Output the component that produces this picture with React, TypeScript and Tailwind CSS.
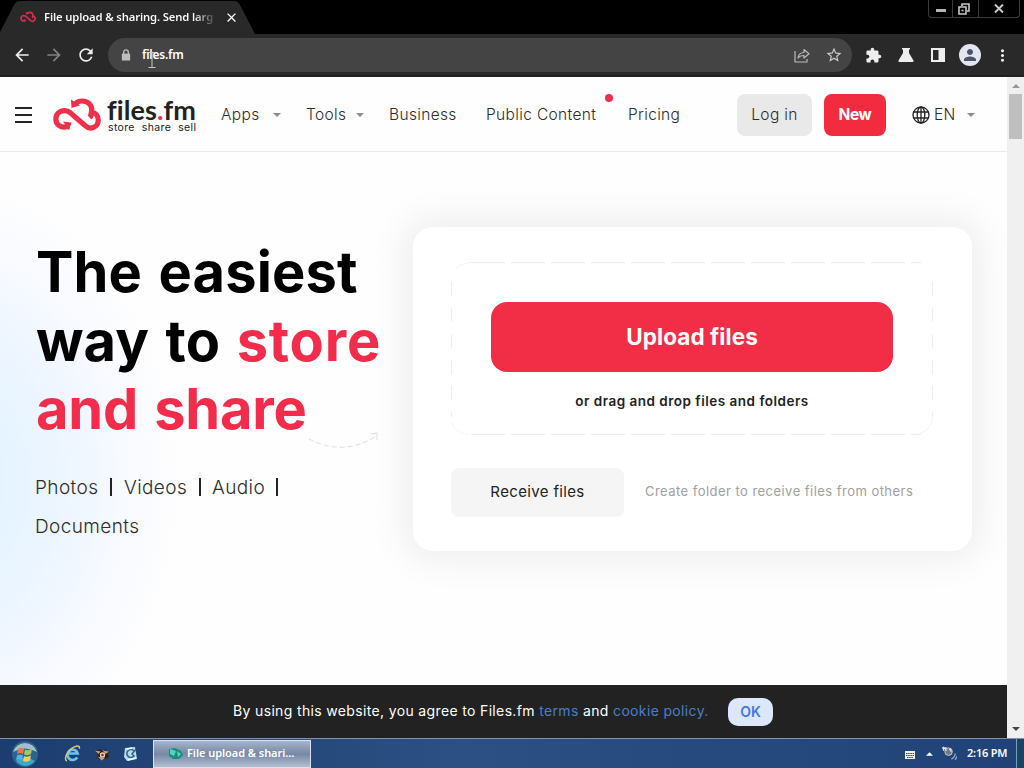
import type { ReactNode } from "react";
import clsx from "clsx";
import { MdArrowBack, MdArrowForward, MdRefresh, MdLock, MdStarBorder, MdExtension, MdMoreVert, MdPerson, MdClose } from "react-icons/md";

function CloudLogo({ className }: { className?: string }) {
  return (
    <svg viewBox="0 0 48 34" className={className} fill="none" stroke="currentColor" strokeWidth="5.2">
      <path d="M14.5 28.5C8 30.5 2.700 26.500 2.900 21C3 13.500 11 10.500 17 14.500L32 27.500C37 32.500 45 29.500 45.2 22.5C45.4 17.500 42.500 14.5 38.5 14C40 6.500 34 2.9 28.5 3C24.5 3.2 22.5 5 21.5 7" />
      <path d="M36.500 19.500C38.800 17.500 39.200 15 38.5 12" />
      <path d="M10 23.500L18.500 24.500L16 32.500Z" fill="currentColor" stroke="none" />
      <path d="M18 1.500L18.500 10L27 7.500Z" fill="currentColor" stroke="none" />
    </svg>
  );
}

function Caret({ className }: { className?: string }) {
  return (
    <svg viewBox="0 0 8 4" className={clsx("h-1 w-2 shrink-0", className)} fill="currentColor">
      <path d="M0 0H8L4 4Z" />
    </svg>
  );
}

function WindowButton({ children, className }: { children: ReactNode; className?: string }) {
  return (
    <span className={clsx("flex items-center justify-center border-r border-[#3c3c3c]", className)}>
      {children}
    </span>
  );
}

function TitleBar() {
  return (
    <div className="flex h-[34px] justify-between bg-black">
      <div className="relative flex h-[34px] w-[256px] items-center pl-5">
        <svg viewBox="0 0 256 34" className="absolute inset-0 h-[34px] w-[256px]" fill="#292929">
          <path d="M0 34V32L14 5Q16 1 20 1H234Q238 1 240 5L255 34Z" />
        </svg>
        <CloudLogo className="relative h-3 w-4 text-[#cf2f4b]" />
        <span className="relative ml-2 w-[174px] bg-linear-to-r from-white from-86% to-[#292929] bg-clip-text font-['Noto_Sans'] text-[11.3px] font-semibold tracking-[-0.15px] whitespace-nowrap text-transparent">
          File upload &amp; sharing. Send larg
        </span>
        <MdClose className="relative ml-[6px] size-[15px] stroke-white text-white" />
      </div>
      <div className="mr-1 flex h-[18px] rounded-b-sm border border-t-0 border-[#3c3c3c] text-[#c8c8c8]">
        <WindowButton className="w-[24px]">
          <span className="mt-1 h-[3px] w-[10px] bg-[#b5b5b5]" />
        </WindowButton>
        <WindowButton className="w-[26px]">
          <svg viewBox="0 0 12 12" className="mr-[3px] size-3" fill="none" stroke="currentColor" strokeWidth="1.6">
            <path d="M4 3V1H11V8H9" />
            <path d="M1 4H8V11H1Z" />
            <path d="M3.5 7.5H5.5" />
          </svg>
        </WindowButton>
        <span className="flex w-[40px] items-center justify-center">
          <svg viewBox="0 0 10 9" className="h-[9px] w-[10px]" fill="none" stroke="currentColor" strokeWidth="2">
            <path d="M1 0.5L9 8.5M9 0.5L1 8.5" />
          </svg>
        </span>
      </div>
    </div>
  );
}

function Toolbar() {
  return (
    <div className="flex h-[43px] items-center border-b-2 border-[#202020] bg-[#292929] pt-px text-[#eeeeee]">
      <MdArrowBack className="ml-3 size-5" />
      <MdArrowForward className="ml-3 size-5 text-[#828282]" />
      <MdRefresh className="ml-3 size-5" />
      <div className="relative ml-3 flex h-[34px] w-[744px] items-center rounded-full bg-[#444444]">
        <svg viewBox="0 0 10 13" className="ml-[13px] h-[12px] w-[10px]" fill="none" stroke="#bdbdbd" strokeWidth="1.500">
          <path d="M0.500 5H9.500V12.500H0.500Z" fill="#bdbdbd" stroke="none" />
          <path d="M2.500 6V3.500A2.500 2.500 0 0 1 7.500 3.500V6" />
        </svg>
        <span className="ml-[11px] font-['Noto_Sans'] text-[12px] font-semibold tracking-[-0.25px] text-white">files.fm</span>
        {/* text cursor over the address */}
        <svg viewBox="0 0 8 18" className="absolute top-[14px] left-[40px] h-[18px] w-2" fill="none" stroke="#c8c8c8">
          <path d="M4 1V15M0.5 15.5H7.5M1 0.5H7" />
        </svg>
        <svg viewBox="0 0 16 16" className="ml-auto size-4" fill="none" stroke="#b9b9b9" strokeWidth="1.2">
          <path d="M1 4V15H13V12" />
          <path d="M4 11C4.500 7.500 6.500 5.500 10 5.500V2.500L15 6.800L10 11V8.500C7.500 8.500 5.500 9 4 11Z" strokeLinejoin="round" />
        </svg>
        <MdStarBorder className="mr-[9px] ml-[15px] size-[18px] text-[#c8c8c8]" />
      </div>
      <MdExtension className="ml-[13px] size-[17px]" />
      <svg viewBox="0 0 16 16" className="ml-4 size-4" fill="currentColor">
        <path d="M4 1H12V2.500H11V6L15.500 13.500Q16 15 14.500 15H1.500Q0 15 0.500 13.500L5 6V2.500H4Z" />
      </svg>
      <svg viewBox="0 0 14 14" className="ml-[17px] size-[14px]" fill="none" stroke="currentColor" strokeWidth="2">
        <path d="M1 1H13V13H1Z" />
        <path d="M8.500 1H13V13H8.500Z" fill="currentColor" />
      </svg>
      <span className="ml-[14px] flex size-[22px] items-center justify-center rounded-full bg-[#e3e6ee] text-[#4c5468]">
        <MdPerson className="size-[18px]" />
      </span>
      <MdMoreVert className="ml-3 size-[19px]" />
    </div>
  );
}

function NavBar() {
  return (
    <nav className="flex h-[75px] items-center border-b border-[#e9e9e9] pt-px text-[15.5px] tracking-[0.35px] text-[#2c2c2c]">
      <div className="ml-[15px] flex w-[17px] flex-col gap-[5px]">
        <span className="h-[2px] bg-[#222]" />
        <span className="h-[2px] bg-[#222]" />
        <span className="h-[2px] bg-[#222]" />
      </div>
      <CloudLogo className="ml-[21px] h-[34px] w-12 text-[#f0304a]" />
      <div className="ml-[6px] flex w-[114px] flex-col pt-[2px] text-[#222]">
        <span className="font-['Lato'] text-[27px] leading-[24px] font-bold tracking-[0.1px]">
          files<span className="text-[#f0304a]">.</span>fm
        </span>
        <span className="flex gap-[7px] pl-px text-[10.500px] leading-[11px] tracking-[0.35px]">
          <span>store</span>
          <span>share</span>
          <span>sell</span>
        </span>
      </div>
      <span className="w-[52px] font-light">Apps</span>
      <Caret className="text-[#8c8c8c]" />
      <span className="ml-[25px] w-[50px] font-light">Tools</span>
      <Caret className="text-[#8c8c8c]" />
      <span className="ml-[25px] w-[97px] font-light">Business</span>
      <span className="relative w-[142px] font-light whitespace-nowrap">
        Public Content
        <span className="absolute -top-[9px] left-[119px] size-2 rounded-full bg-[#ee2d50]" />
      </span>
      <span className="w-[109px] font-light">Pricing</span>
      <span className="flex h-[42px] w-[75px] items-center justify-center rounded-lg bg-[#e9e9e9] font-light">Log in</span>
      <span className="ml-3 flex h-[42px] w-[62px] items-center justify-center rounded-lg bg-[#f22b3f] font-bold tracking-tight text-white">New</span>
      <svg viewBox="0 0 18 18" className="ml-[26px] size-[18px]" fill="none" stroke="#222" strokeWidth="1.3">
        <circle cx="9" cy="9" r="8" />
        <ellipse cx="9" cy="9" rx="3.800" ry="8" />
        <path d="M1.500 6H16.500M1.500 12H16.500M9 1V17" />
      </svg>
      <span className="ml-1 w-[33px] font-light">EN</span>
      <Caret className="text-[#8c8c8c]" />
    </nav>
  );
}

function UploadCard() {
  return (
    <div className="mt-[75px] ml-[26px] h-[324px] w-[559px] shrink-0 rounded-[20px] bg-white px-[38px] pt-[35px] shadow-[0_0_34px_12px_rgba(0,0,0,0.06)]">
      <div className="relative flex h-[173px] w-[482px] flex-col items-center pt-[40px]">
        <svg viewBox="0 0 482 173" className="absolute inset-0 h-[173px] w-[482px]" fill="none" stroke="#eeeeee" strokeDasharray="34 6">
          <path d="M20 0.500H470" strokeWidth="1.500" />
          <path d="M20 172.500H470" strokeWidth="1.500" />
          <path d="M0.500 20V155M481.500 20V155" strokeDasharray="14 12" />
          <path d="M4 8Q9 1 20 0.500M0.500 160Q4 172 18 172.500M464 172.500Q480 171 481.500 155" stroke="#f4f4f4" strokeDasharray="none" />
        </svg>
        <button className="relative h-[70px] w-[402px] rounded-2xl bg-[#f22d46] text-[22.500px] font-bold tracking-[0.08px] text-white">Upload files</button>
        <span className="relative mt-[19px] text-[13.500px] leading-5 font-semibold tracking-[0.5px] text-[#222]">or drag and drop files and folders</span>
      </div>
      <div className="mt-[33px] flex items-center">
        <button className="h-[49px] w-[173px] rounded-lg bg-[#f5f5f5] text-[15px] tracking-[0.35px] text-[#222]">Receive files</button>
        <span className="ml-[21px] pb-px text-[13px] tracking-[0.46px] whitespace-nowrap text-[#a0a0a0]">Create folder to receive files from others</span>
      </div>
    </div>
  );
}

function Hero() {
  return (
    <main className="flex h-[533px] bg-[#fefefe] bg-[radial-gradient(ellipse_240px_300px_at_-60px_330px,#dcf3ff_0%,#ecf5ff_50%,#f8faff_78%,#fefefe_100%)]">
      <div className="relative ml-[35px] w-[352px] shrink-0 pt-[86px]">
        <h1 className="pl-px text-[56px] leading-[68.500px] font-bold tracking-[0.15px] whitespace-nowrap text-black [word-spacing:3px]">
          The easiest
          <br />
          way to <span className="tracking-[0.8px] text-[#f22d4c]">store</span>
          <br />
          <span className="tracking-[-0.2px] text-[#f22d4c]">and share</span>
        </h1>
        <svg viewBox="0 0 74 22" className="absolute top-[276px] left-[273px] h-[22px] w-[74px]" fill="none" stroke="#dedede" strokeDasharray="5 3">
          <path d="M1 11Q36 29 68 8" />
          <path d="M63 6L69 5V12" strokeDasharray="none" />
        </svg>
        <div className="mt-[24px] text-[19px] leading-[39px] font-light tracking-[0.4px] text-[#2c2c2c]">
          <div className="flex items-center">
            <span className="w-[75px]">Photos</span>
            <span className="mr-[12px] h-[18px] w-[2px] bg-[#222]" />
            <span className="w-[75px]">Videos</span>
            <span className="mr-[11px] h-[18px] w-[2px] bg-[#222]" />
            <span className="w-[64px]">Audio</span>
            <span className="h-[18px] w-[2px] bg-[#222]" />
          </div>
          Documents
        </div>
      </div>
      <UploadCard />
    </main>
  );
}

function CookieBar() {
  return (
    <div className="flex h-[53px] items-center bg-[#222222] pl-[233px] text-[14px] text-white">
      <p className="w-[495px] pb-[2px] tracking-[0.35px] whitespace-nowrap">
        By using this website, you agree to Files.fm <a className="text-[#4a7fc8]">terms</a> and{" "}
        <a className="text-[#4a7fc8]">cookie policy.</a>
      </p>
      <button className="h-7 w-[45px] rounded-[10px] bg-[#dce7fb] font-semibold text-[#4379dd]">OK</button>
    </div>
  );
}

function Scrollbar() {
  return (
    <div className="flex w-[17px] flex-col items-center bg-[#f0f0f0]">
      <Caret className="mt-[7px] rotate-180 text-[#989898]" />
      <span className="mt-[6px] h-[45px] w-[13px] bg-[#bfbfbf]" />
      <Caret className="mt-auto mb-[7px] text-[#454545]" />
    </div>
  );
}

function Taskbar() {
  return (
    <footer className="flex h-[30px] items-center border-t border-[#8094ad] bg-linear-to-r from-[#1c3d70] via-[#2c5083] via-45% to-[#204278] font-['Noto_Sans'] text-white">
      {/* Start orb */}
      <svg viewBox="0 0 28 28" className="ml-[11px] size-7">
        <circle cx="14" cy="14" r="13" fill="#2a648f" />
        <path d="M2 12A12.500 12.500 0 0 1 26 12Q14 5 2 12Z" fill="#a6bdc9" />
        <path d="M5 21Q14 14 24 21Q14 31 5 21Z" fill="#38a8cf" />
        <path d="M7 9Q10 7 13 9L12 14Q9 12 6 14Z" fill="#e87940" />
        <path d="M14 9.500Q17 11 21 9L20 14Q17 16 13 14.500Z" fill="#a4c956" />
        <path d="M6 15.500Q9 13.500 12 15.500L11 20.500Q8 18.500 5 20.500Z" fill="#58afe6" />
        <path d="M13 16Q16 17.500 20 15.500L19 20.500Q16 22.500 12 21Z" fill="#f2cc58" />
      </svg>
      {/* Internet Explorer */}
      <svg viewBox="0 0 18 18" className="ml-[25px] size-[17px]" fill="none">
        <path d="M14 13A5.500 5.500 0 1 1 14.500 9H5" stroke="#67c4ef" strokeWidth="2.800" />
        <path d="M3 17C-1 15 4 5 11 2C16 0 17 2 16 4" stroke="#e1c66a" strokeWidth="1.600" />
      </svg>
      <svg viewBox="0 0 18 16" className="ml-[13px] h-4 w-[17px]">
        <path d="M1 5L7 3L9 5L13 2L12 5L17 6L14 8L16 11L12 13L6 14L3 11L5 9Z" fill="#271d19" />
        <path d="M1 4.500L7 5L5 8ZM9 4L16 5.500L12 8ZM4 11L12 12L8 15Z" fill="#d59b63" />
        <circle cx="9" cy="9" r="2.800" fill="#e9d4bd" />
        <circle cx="9" cy="9" r="1.300" fill="#6e2925" />
      </svg>
      <svg viewBox="0 0 16 16" className="ml-[12px] size-4" fill="none">
        <path d="M2 2L12 1L14 13L4 15L1 11Z" fill="#b9dced" />
        <path d="M11 5A4 4 0 1 0 11 10L9 8L13 3" stroke="#286b94" strokeWidth="1.600" />
        <path d="M4 3L9 2M5 14L13 12" stroke="white" strokeWidth="1.500" />
      </svg>
      <div className="ml-[14px] flex h-[28px] w-[158px] items-center border border-[#d9e2ee] bg-linear-to-b from-[#a8b5c9] via-[#7688a5] to-[#b2bfd0] pl-[14px]">
        <svg viewBox="0 0 16 14" className="h-[14px] w-4">
          <path d="M1 2L7 1L13 4L15 8L11 12L5 12L1 9Z" fill="#188b83" />
          <path d="M2 2L8 4L6 9L2 7ZM9 4L13 7L10 10Z" fill="#55d4bb" />
        </svg>
        <span className="ml-[3px] text-[11px] font-semibold tracking-[-0.05px] whitespace-nowrap">File upload &amp; shari...</span>
      </div>
      <svg viewBox="0 0 10 8" className="mt-[3px] ml-auto h-2 w-[10px]">
        <path d="M0 0H10V8H0Z" fill="#f0f2df" />
        <path d="M1 2.500H9M1 4.500H9M2 6.500H8" stroke="#343d49" strokeDasharray="1.500 0.700" />
      </svg>
      <Caret className="ml-[11px] h-1 w-[7px] rotate-180" />
      <svg viewBox="0 0 16 16" className="ml-[9px] size-[15px]" fill="none">
        <circle cx="7" cy="6" r="4" fill="#72797d" stroke="#cbd0cc" />
        <path d="M1 1L5 5M2 5L1 2H5M8 3L10 6" stroke="#e7e9df" strokeWidth="1.300" />
        <path d="M10 14Q14 12 14 8M14 15L16 11" stroke="#9cafc4" strokeWidth="1.300" />
      </svg>
      <span className="ml-[10px] w-[49px] text-[11px] font-semibold tracking-[-0.2px] whitespace-nowrap">2:16 PM</span>
      <span className="h-[29px] w-2 border-l border-[#77a0b6] bg-[#194562]" />
    </footer>
  );
}

export default function App() {
  return (
    <div className="flex h-[768px] w-[1024px] flex-col overflow-hidden bg-white font-['Inter',sans-serif]">
      <TitleBar />
      <Toolbar />
      <div className="flex h-[661px]">
        <div className="w-[1007px] overflow-hidden bg-[#fefefe]">
          <NavBar />
          <Hero />
          <CookieBar />
        </div>
        <Scrollbar />
      </div>
      <Taskbar />
    </div>
  );
}
